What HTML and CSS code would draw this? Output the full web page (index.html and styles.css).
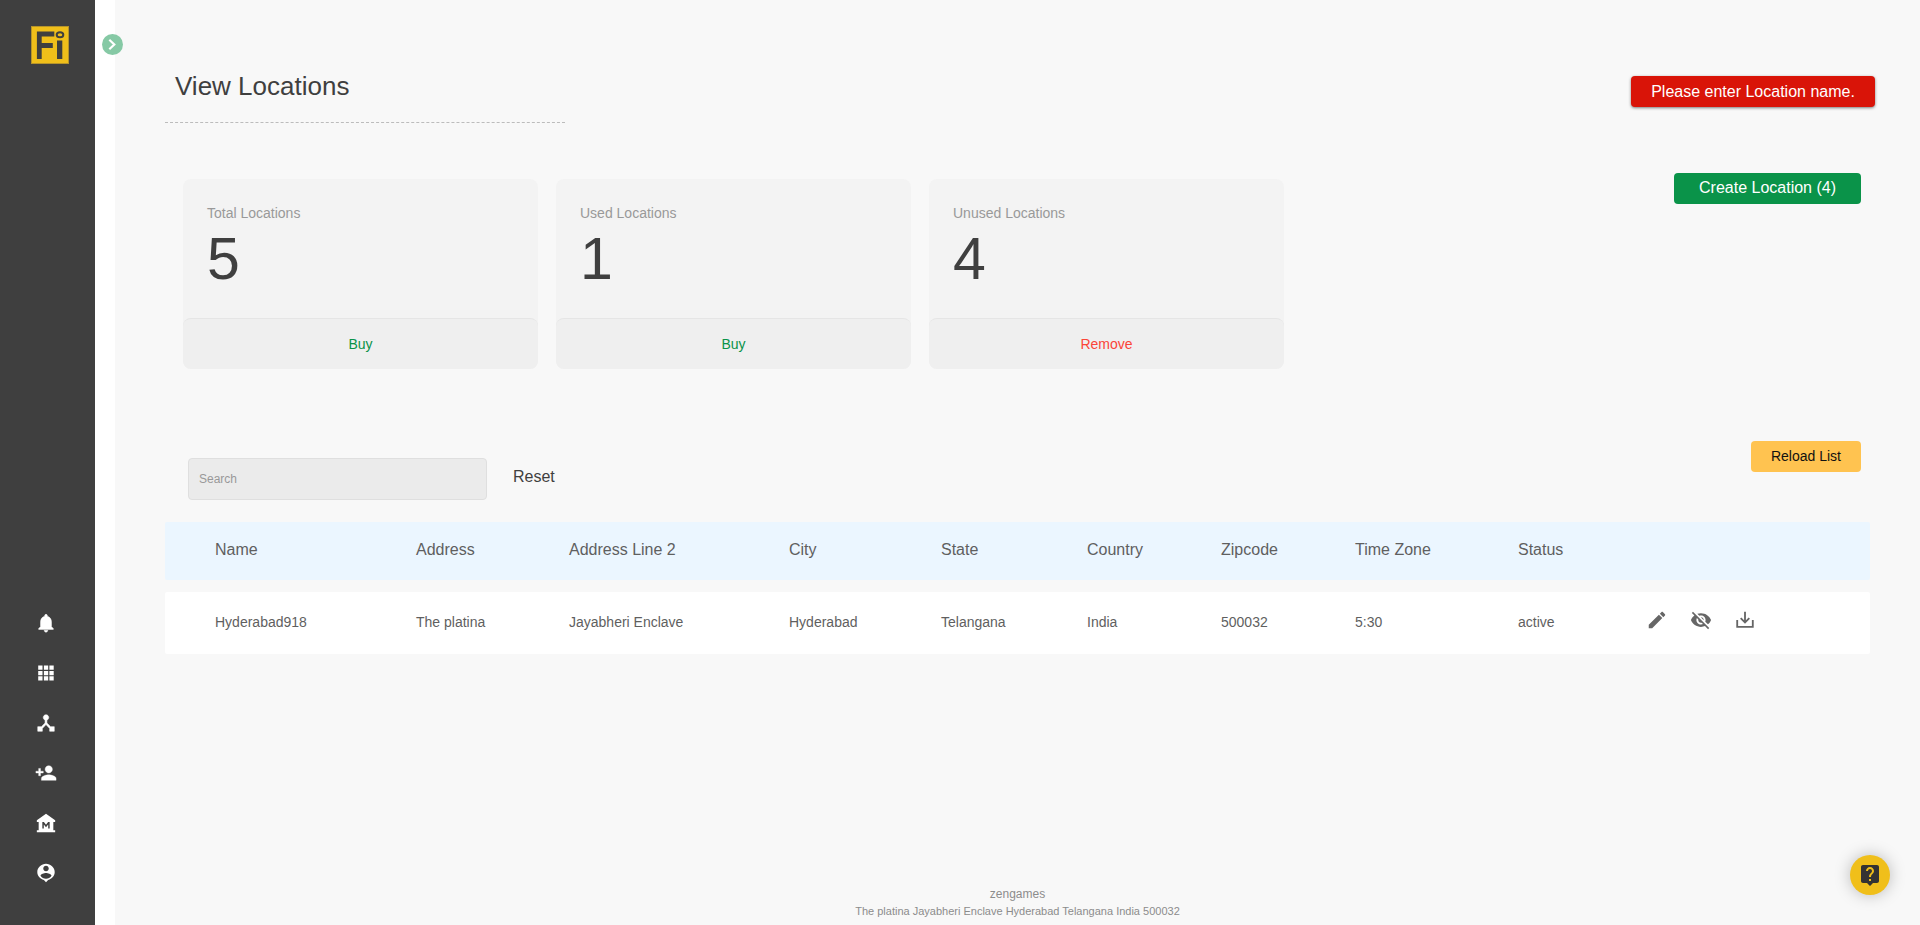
FILE: index.html
```html
<!DOCTYPE html>
<html lang="en">
<head>
<meta charset="utf-8">
<title>View Locations</title>
<link rel="stylesheet" href="styles.css">
</head>
<body>
<aside class="sidebar">
  <svg class="logo" viewBox="0 0 38 38"><rect x=".5" y=".5" width="37" height="37" fill="#f0bf1a" stroke="#b6942a"/><path d="M8.300 33V8h15M8.300 19.500h13.500" fill="none" stroke="#3f3f3f" stroke-width="4.800"/><path d="M26 14.500h5.300V33H26z" fill="#3f3f3f"/><ellipse cx="29" cy="8.700" rx="3.300" ry="2.500" fill="none" stroke="#3f3f3f" stroke-width="2"/></svg>
  <nav class="nav">
    <svg viewBox="0 0 24 24"><path d="M12 22c1.100 0 2-.9 2-2h-4c0 1.100.9 2 2 2zm6-6v-5c0-3.070-1.640-5.640-4.500-6.320V4c0-.83-.67-1.500-1.500-1.500s-1.500.67-1.500 1.500v.68C7.630 5.360 6 7.920 6 11v5l-2 2v1h16v-1l-2-2z" stroke="#fff" stroke-width=".5"/></svg>
    <svg viewBox="0 0 24 24"><path d="M3.500 8.500h4.700V3.700H3.500v4.800zm6.200 11.800h4.700v-4.700H9.700v4.700zm-6.200 0h4.700v-4.700H3.500v4.700zm0-5.900h4.700V9.700H3.500v4.700zm6.200 0h4.700V9.700H9.700v4.700zm6-10.700v4.800h4.700V3.700h-4.700zm-6 4.800h4.700V3.700H9.700v4.800zm6 5.900h4.700V9.700h-4.700v4.700zm0 5.900h4.700v-4.700h-4.700v4.700z"/></svg>
    <svg viewBox="0 0 24 24"><path d="M17 16l-4-4V8.820C14.160 8.400 15 7.300 15 6c0-1.660-1.340-3-3-3S9 4.340 9 6c0 1.300.84 2.400 2 2.820V12l-4 4H3v5h5v-3.050l4-4.200 4 4.200V21h5v-5h-4z" stroke="#fff" stroke-width=".6"/></svg>
    <svg viewBox="0 0 24 24"><path d="M15 12c2.210 0 4-1.790 4-4s-1.790-4-4-4-4 1.790-4 4 1.790 4 4 4zm-9-2V7H4v3H1v2h3v3h2v-3h3v-2H6zm9 4c-2.670 0-8 1.340-8 4v2h16v-2c0-2.660-5.330-4-8-4z" stroke="#fff" stroke-width=".4"/></svg>
    <svg viewBox="0 0 24 24"><path fill-rule="evenodd" d="M22 11V9L12 2 2 9v2h2v9H2v2h20v-2h-2v-9h2zm-6 7h-1.600v-4.400l-2.400 3-2.400-3V18H8v-7h1.700l2.300 3 2.300-3H16v7z"/></svg>
    <svg viewBox="0 0 24 24"><path d="M12 2C7.030 2 2.500 6 2.500 11c0 4.170 3 7.670 7.190 8.690L12 22l2.310-2.310C18.500 18.670 21.500 15.170 21.500 11c0-5-4.530-9-9.500-9zm0 2c1.660 0 3 1.340 3 3s-1.340 3-3 3-3-1.340-3-3 1.340-3 3-3zm0 14.300c-2.500 0-4.710-1.280-6-3.220.03-1.990 4-3.080 6-3.080s5.970 1.090 6 3.080c-1.290 1.940-3.500 3.220-6 3.220z"/></svg>
  </nav>
  <button class="toggle" aria-label="Expand menu"><svg viewBox="0 0 21 21"><path d="M7.300 5.800l5 4.700-5 4.700" fill="none" stroke="#fff" stroke-width="2.200"/></svg></button>
</aside>
<main class="main">
  <header class="top">
    <h1 class="title">View Locations</h1>
    <div class="alert">Please enter Location name.</div>
  </header>
  <section class="summary">
    <div class="cards">
      <article class="card"><div class="card-body"><div class="card-label">Total Locations</div><div class="card-value">5</div></div><a class="card-action">Buy</a></article>
      <article class="card"><div class="card-body"><div class="card-label">Used Locations</div><div class="card-value">1</div></div><a class="card-action">Buy</a></article>
      <article class="card"><div class="card-body"><div class="card-label">Unused Locations</div><div class="card-value">4</div></div><a class="card-action danger">Remove</a></article>
    </div>
    <button class="btn create">Create Location (4)</button>
  </section>
  <section class="tools">
    <input class="search" type="text" placeholder="Search">
    <a class="reset">Reset</a>
    <button class="btn reload">Reload List</button>
  </section>
  <section class="table">
    <div class="row head"><span>Name</span><span>Address</span><span>Address Line 2</span><span>City</span><span>State</span><span>Country</span><span>Zipcode</span><span>Time Zone</span><span>Status</span><span></span></div>
    <div class="row data"><span>Hyderabad918</span><span>The platina</span><span>Jayabheri Enclave</span><span>Hyderabad</span><span>Telangana</span><span>India</span><span>500032</span><span>5:30</span><span>active</span>
      <div class="actions">
        <svg viewBox="0 0 24 24"><path d="M3 17.250V21h3.750L17.810 9.940l-3.750-3.750L3 17.250zM20.710 7.040c.39-.39.39-1.020 0-1.410l-2.340-2.340c-.39-.39-1.020-.39-1.410 0l-1.830 1.830 3.750 3.750 1.830-1.830z"/></svg>
        <svg viewBox="0 0 24 24"><path d="M12 7c2.760 0 5 2.240 5 5 0 .65-.13 1.260-.36 1.830l2.920 2.920c1.510-1.260 2.700-2.890 3.430-4.750-1.730-4.390-6-7.500-11-7.500-1.400 0-2.740.25-3.980.7l2.160 2.160C10.740 7.130 11.350 7 12 7zM2 4.270l2.280 2.280.46.46C3.080 8.300 1.780 10.020 1 12c1.730 4.390 6 7.500 11 7.500 1.550 0 3.030-.3 4.380-.84l.42.42L19.730 22 21 20.730 3.270 3 2 4.270zM7.530 9.800l1.550 1.550c-.05.21-.08.43-.08.65 0 1.660 1.340 3 3 3 .22 0 .44-.03.65-.08l1.550 1.550c-.67.33-1.410.53-2.200.53-2.760 0-5-2.240-5-5 0-.79.2-1.530.53-2.200zm4.310-.78l3.150 3.150.02-.16c0-1.660-1.340-3-3-3l-.17.01z"/></svg>
        <svg viewBox="0 0 24 24"><path d="M2.500 12v8.500h19V12h-2v6.500h-15V12zM11 3v9.200L8 9.300 6.600 10.700 12 16l5.400-5.300L16 9.300l-3 2.900V3z"/></svg>
      </div>
    </div>
  </section>
  <footer class="footer"><div class="company">zengames</div><div class="address">The platina Jayabheri Enclave Hyderabad Telangana India 500032</div></footer>
</main>
<button class="help" aria-label="Help"><svg viewBox="0 0 24 24"><path d="M19 2H5c-1.110 0-2 .9-2 2v14c0 1.100.89 2 2 2h4l3 3 3-3h4c1.100 0 2-.9 2-2V4c0-1.100-.9-2-2-2zm-6 16h-2v-2h2v2zm2.070-7.750l-.9.920C13.450 11.900 13 12.500 13 14h-2v-.5c0-1.100.45-2.100 1.170-2.830l1.240-1.260c.37-.36.59-.86.59-1.410 0-1.100-.9-2-2-2s-2 .9-2 2H8c0-2.210 1.790-4 4-4s4 1.790 4 4c0 .88-.36 1.680-.93 2.250z"/></svg></button>
</body>
</html>
```
FILE: styles.css
```css
* { box-sizing: border-box; }
body {
  margin: 0;
  height: 925px;
  display: flex;
  overflow: hidden;
  background: #fff;
  color: #3f3f3f;
  font-family: "Liberation Sans", Arial, sans-serif;
}
button { border: 0; padding: 0; font-family: inherit; }
svg { display: block; }
.sidebar {
  position: relative;
  width: 95px;
  margin-right: 20px;
  padding: 26px 0 41px;
  display: flex;
  flex-direction: column;
  justify-content: space-between;
  background: #3f3f3f;
}
.logo { width: 38px; height: 38px; margin-left: 31px; }
.nav { display: flex; flex-direction: column; gap: 28px; padding-left: 35px; }
.nav svg { width: 22px; height: 22px; fill: #fff; }
.toggle {
  position: absolute;
  left: 102px;
  top: 34px;
  width: 21px;
  height: 21px;
  border-radius: 50%;
  background: #86c9a5;
}
.main {
  flex: 1;
  display: flex;
  flex-direction: column;
  padding: 71px 50px 0;
  background: #f8f8f8;
}
.top { display: flex; justify-content: space-between; align-items: flex-start; margin-right: -5px; }
.title {
  width: 400px;
  height: 52px;
  margin: 0;
  padding-left: 10px;
  border-bottom: 1px dashed #bcbcbc;
  font-size: 26px;
  line-height: 30px;
  font-weight: 400;
}
.alert {
  width: 244px;
  height: 31px;
  margin-top: 5px;
  border-radius: 4px;
  background: #d91408;
  color: #fff;
  font-size: 16px;
  line-height: 31px;
  text-align: center;
  box-shadow: 0 1px 3px rgba(0, 0, 0, .5);
}
.summary { display: flex; justify-content: space-between; align-items: flex-start; margin: 50px 9px 0 18px; }
.cards { display: flex; gap: 18px; margin-top: 6px; }
.card { width: 355px; height: 190px; display: flex; flex-direction: column; border-radius: 8px; background: #f3f3f3; }
.card-body { flex: 1; padding: 26px 24px 0; }
.card-label { margin-bottom: 8px; color: #999; font-size: 14px; line-height: 16px; }
.card-value { font-size: 59px; line-height: 60px; }
.card-action {
  height: 51px;
  border-top: 1px solid #e5e5e5;
  border-radius: 8px;
  background: #efefef;
  color: #0a9349;
  font-size: 14px;
  line-height: 50px;
  text-align: center;
}
.danger { color: #fb4538; }
.btn { height: 31px; border-radius: 4px; line-height: 31px; }
.create { width: 187px; padding-bottom: 2px; background: #0a9349; color: #fff; font-size: 16px; line-height: 29px; }
.reload { width: 110px; margin-left: auto; background: #ffc350; color: #111; font-size: 14px; }
.tools { display: flex; align-items: flex-start; margin: 72px 9px 22px 23px; }
.search {
  width: 299px;
  height: 42px;
  margin: 17px 26px 0 0;
  padding: 0 10px;
  border: 1px solid #dfdfdf;
  border-radius: 4px;
  background: #ebebeb;
  font: 12px "Liberation Sans", Arial, sans-serif;
}
.search::placeholder { color: #999; }
.reset { margin-top: 26px; font-size: 16px; line-height: 20px; }
.table { display: flex; flex-direction: column; gap: 12px; }
.row {
  display: grid;
  grid-template-columns: 201px 153px 220px 152px 146px 134px 134px 163px 128px 1fr;
  align-items: center;
  padding-left: 50px;
  border-radius: 2px;
  color: #5f5f5f;
}
.head { height: 58px; padding-bottom: 2px; background: #ebf6ff; font-size: 16px; }
.data { height: 62px; padding-bottom: 2px; background: #fff; font-size: 14px; }
.actions { display: flex; gap: 22px; margin-top: -4px; }
.actions svg { width: 22px; height: 22px; fill: #666; }
.footer { margin: auto 0 6px; color: #8c8c8c; text-align: center; }
.company { font-size: 12px; line-height: 18px; }
.address { font-size: 11px; line-height: 16px; }
.help {
  position: absolute;
  left: 1850px;
  top: 855px;
  width: 40px;
  height: 40px;
  display: flex;
  align-items: center;
  justify-content: center;
  border-radius: 50%;
  background: #f0bf1a;
  box-shadow: 0 0 16px rgba(0, 0, 0, .25);
}
.help svg { width: 24px; height: 24px; fill: #333; }
```
